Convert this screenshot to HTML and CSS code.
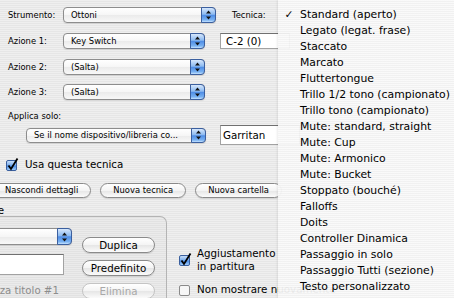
FILE: index.html
```html
<!DOCTYPE html>
<html lang="it">
<head>
    <meta charset="UTF-8">
    <title>Tecniche esecutive</title>
    <link rel="stylesheet" href="styles.css">
</head>
<body>

    <div class="dialog">
        <div class="form-row">
            <span class="form-label">Strumento:</span>
            <div class="popup popup-strumento">
                <span class="popup-text">Ottoni</span>
                <span class="popup-arrows"><svg width="7" height="10" viewBox="0 0 7 10"><path d="M3.5 0.5 L6 3.5 H1Z M3.5 9.5 L6 6.5 H1Z" fill="#111"/></svg></span>
            </div>
            <span class="tecnica-label">Tecnica:</span>
        </div>

        <div class="form-row">
            <span class="form-label">Azione 1:</span>
            <div class="popup popup-azione">
                <span class="popup-text">Key Switch</span>
                <span class="popup-arrows"><svg width="7" height="10" viewBox="0 0 7 10"><path d="M3.5 0.5 L6 3.5 H1Z M3.5 9.5 L6 6.5 H1Z" fill="#111"/></svg></span>
            </div>
            <div class="field field-note">C-2 (0)</div>
        </div>

        <div class="form-row row-tight">
            <span class="form-label">Azione 2:</span>
            <div class="popup popup-azione">
                <span class="popup-text">(Salta)</span>
                <span class="popup-arrows"><svg width="7" height="10" viewBox="0 0 7 10"><path d="M3.5 0.5 L6 3.5 H1Z M3.5 9.5 L6 6.5 H1Z" fill="#111"/></svg></span>
            </div>
        </div>

        <div class="form-row">
            <span class="form-label">Azione 3:</span>
            <div class="popup popup-azione">
                <span class="popup-text">(Salta)</span>
                <span class="popup-arrows"><svg width="7" height="10" viewBox="0 0 7 10"><path d="M3.5 0.5 L6 3.5 H1Z M3.5 9.5 L6 6.5 H1Z" fill="#111"/></svg></span>
            </div>
        </div>

        <div class="applica-label">Applica solo:</div>
        <div class="applica-row">
            <div class="popup popup-applica">
                <span class="popup-text">Se il nome dispositivo/libreria co...</span>
                <span class="popup-arrows"><svg width="7" height="10" viewBox="0 0 7 10"><path d="M3.5 0.5 L6 3.5 H1Z M3.5 9.5 L6 6.5 H1Z" fill="#111"/></svg></span>
            </div>
            <div class="field field-garritan">Garritan</div>
        </div>

        <div class="check-row check-main">
            <svg class="checkbox" width="14" height="15" viewBox="0 0 14 15">
                <defs>
                    <linearGradient id="aqua1" x1="0" y1="0" x2="0" y2="1">
                        <stop offset="0" stop-color="#cfe3fb"/>
                        <stop offset="0.45" stop-color="#7fb1ee"/>
                        <stop offset="0.55" stop-color="#4a8be4"/>
                        <stop offset="1" stop-color="#a8d4ff"/>
                    </linearGradient>
                </defs>
                <rect x="1.5" y="3.5" width="10" height="10" rx="1.5" fill="url(#aqua1)" stroke="#3a5f9e"/>
                <path d="M3.5 8.5 L6 12 L12.5 1.5" fill="none" stroke="#000" stroke-width="1.8"/>
            </svg>
            <span>Usa questa tecnica</span>
        </div>

        <div class="button-row">
            <button class="pill first">Nascondi dettagli</button>
            <button class="pill">Nuova tecnica</button>
            <button class="pill">Nuova cartella</button>
        </div>

        <div class="group-title">Partiture</div>

        <div class="lower">
            <div class="group">
                <div class="group-left">
                    <div class="popup popup-group">
                        <span class="popup-text"></span>
                        <span class="popup-arrows"><svg width="7" height="10" viewBox="0 0 7 10"><path d="M3.5 0.5 L6 3.5 H1Z M3.5 9.5 L6 6.5 H1Z" fill="#111"/></svg></span>
                    </div>
                    <div class="field field-name"></div>
                    <div class="caption">Senza titolo #1</div>
                </div>
                <div class="group-buttons">
                    <button class="pill big">Duplica</button>
                    <button class="pill big">Predefinito</button>
                    <button class="pill big" disabled>Elimina</button>
                </div>
            </div>

            <div class="checks">
                <div class="check-row">
                    <svg class="checkbox" width="14" height="15" viewBox="0 0 14 15">
                        <defs>
                            <linearGradient id="aqua2" x1="0" y1="0" x2="0" y2="1">
                                <stop offset="0" stop-color="#cfe3fb"/>
                                <stop offset="0.45" stop-color="#7fb1ee"/>
                                <stop offset="0.55" stop-color="#4a8be4"/>
                                <stop offset="1" stop-color="#a8d4ff"/>
                            </linearGradient>
                        </defs>
                        <rect x="1.5" y="3.5" width="10" height="10" rx="1.5" fill="url(#aqua2)" stroke="#3a5f9e"/>
                        <path d="M3.5 8.5 L6 12 L12.5 1.5" fill="none" stroke="#000" stroke-width="1.8"/>
                    </svg>
                    <span>Aggiustamento<br>in partitura</span>
                </div>
                <div class="check-row">
                    <svg class="checkbox" width="14" height="15" viewBox="0 0 14 15">
                        <rect x="1.5" y="3.5" width="10" height="10" rx="1.5" fill="#f7f7f7" stroke="#8a8a8a"/>
                    </svg>
                    <span>Non mostrare nuovamente</span>
                </div>
            </div>
        </div>
    </div>

    <!-- open popup menu of "Tecnica" -->
    <div class="menu">
        <div class="menu-item"><span class="menu-check">✓</span>Standard (aperto)</div>
        <div class="menu-item"><span class="menu-check"></span>Legato (legat. frase)</div>
        <div class="menu-item"><span class="menu-check"></span>Staccato</div>
        <div class="menu-item"><span class="menu-check"></span>Marcato</div>
        <div class="menu-item"><span class="menu-check"></span>Fluttertongue</div>
        <div class="menu-item"><span class="menu-check"></span>Trillo 1/2 tono (campionato)</div>
        <div class="menu-item"><span class="menu-check"></span>Trillo tono (campionato)</div>
        <div class="menu-item"><span class="menu-check"></span>Mute: standard, straight</div>
        <div class="menu-item"><span class="menu-check"></span>Mute: Cup</div>
        <div class="menu-item"><span class="menu-check"></span>Mute: Armonico</div>
        <div class="menu-item"><span class="menu-check"></span>Mute: Bucket</div>
        <div class="menu-item"><span class="menu-check"></span>Stoppato (bouché)</div>
        <div class="menu-item"><span class="menu-check"></span>Falloffs</div>
        <div class="menu-item"><span class="menu-check"></span>Doits</div>
        <div class="menu-item"><span class="menu-check"></span>Controller Dinamica</div>
        <div class="menu-item"><span class="menu-check"></span>Passaggio in solo</div>
        <div class="menu-item"><span class="menu-check"></span>Passaggio Tutti (sezione)</div>
        <div class="menu-item"><span class="menu-check"></span>Testo personalizzato</div>
    </div>

</body>
</html>
```

FILE: styles.css
```css
* {
    box-sizing: border-box;
}

body {
    margin: 0;
    width: 454px;
    height: 298px;
    overflow: hidden;
    position: relative;
    font-family: 'DejaVu Sans', sans-serif;
    font-size: 8.4px;
    color: #000;
    background: repeating-linear-gradient(to bottom, #efefef 0 1px, #e6e6e6 1px 2px); /* pinstripes */
}

.dialog {
    padding-top: 7px;
}

.form-row {
    display: flex;
    align-items: center;
    height: 16px;
    margin-bottom: 10px;
}

.form-row.row-tight {
    margin-bottom: 9px;
}

.form-label {
    flex: none;
    width: 63px;
    padding-left: 8px;
}

.tecnica-label {
    margin-left: 16px;
}

/* aqua popup button */
.popup {
    flex: none;
    display: flex;
    align-items: center;
    height: 16px;
    padding-left: 7px;
    border: 1px solid #8d8d8d;
    border-radius: 4px;
    background: linear-gradient(#ffffff, #f6f6f6 50%, #ebebeb 52%, #f8f8f8);
    box-shadow: 0 1px 1px rgba(0, 0, 0, 0.1);
}

.popup-text {
    flex: 1;
    white-space: nowrap;
    overflow: hidden;
}

.popup-arrows {
    flex: none;
    width: 15px;
    align-self: stretch;
    margin: -1px -1px -1px 0;
    border: 1px solid #3b5f9f;
    border-radius: 0 4px 4px 0;
    background: linear-gradient(#d6e7fc, #8bb9f0 45%, #4f8de5 52%, #78b1f2 85%, #c4e2ff);
    display: flex;
    align-items: center;
    justify-content: center;
}

.popup-strumento {
    width: 153px;
}

.popup-azione {
    width: 142px;
}

.popup-applica {
    width: 180px;
    height: 15px;
}

.popup-group {
    width: 93px;
    height: 17px;
}

/* text fields */
.field {
    flex: none;
    background: #fff;
    border: 1px solid #a2a2a2;
    border-top-color: #707070;
    font-size: 10.3px;
    white-space: nowrap;
    display: flex;
    align-items: center;
}

.field-note {
    width: 70px;
    height: 16px;
    margin-left: 15px;
    padding-left: 5px;
}

.field-garritan {
    width: 80px;
    height: 20px;
    margin-left: 14px;
    padding-left: 2px;
}

.field-name {
    width: 85px;
    height: 21px;
    margin-top: 9px;
}

.applica-label {
    margin-top: 4px;
    padding-left: 8px;
    line-height: 12px;
}

.applica-row {
    display: flex;
    align-items: center;
    height: 20px;
    margin-top: 3px;
    padding-left: 26px;
}

/* checkboxes */
.check-row {
    display: flex;
    align-items: center;
    font-size: 10.3px;
    line-height: 12.5px;
}

.checkbox {
    flex: none;
    margin-right: 5px;
}

.check-main {
    margin-top: 12px;
    padding-left: 5px;
    height: 15px;
}

.check-main span {
    margin-left: 1px;
}

/* aqua push buttons */
.pill {
    font-family: 'DejaVu Sans', sans-serif;
    font-size: 8.4px;
    color: #000;
    height: 15px;
    padding: 0 12px;
    border: 1px solid #8a8a8a;
    border-radius: 8px;
    background: linear-gradient(#ffffff, #f4f4f4 50%, #e6e6e6 52%, #fbfbfb);
    box-shadow: 0 1px 1px rgba(0, 0, 0, 0.12);
    white-space: nowrap;
    line-height: 13px;
}

.pill.big {
    width: 73px;
    height: 16px;
    padding: 0;
    font-size: 10.3px;
}

.pill:disabled {
    color: #a8a8a8;
    border-color: #c4c4c4;
    box-shadow: none;
}

.button-row {
    display: flex;
    gap: 9px;
    margin-top: 11px;
}

.pill.first {
    margin-left: -8px;
}

.group-title {
    margin-top: 6px;
    margin-left: -40px;
    font-size: 10.3px;
    line-height: 12px;
}

.lower {
    display: flex;
    align-items: flex-start;
    margin-top: 0;
}

.group {
    flex: none;
    display: flex;
    gap: 10px;
    width: 197px;
    height: 100px;
    margin-left: -30px;
    padding: 11px 0 0 8px;
    border: 1px solid #b4b4b4;
    border-bottom: none;
    border-radius: 0 7px 0 0;
    background: rgba(0, 0, 0, 0.015);
}

.group-left {
    width: 93px;
}

.caption {
    margin-top: 9px;
    margin-left: 1.5px;
    font-size: 10.2px;
    line-height: 13px;
    color: #8c8c8c;
    white-space: nowrap;
}

.group-buttons {
    display: flex;
    flex-direction: column;
    gap: 7px;
    margin-top: 9px;
}

.checks {
    margin-left: 11px;
    margin-top: 31px;
    display: flex;
    flex-direction: column;
    gap: 10px;
}

.checks .check-row {
    white-space: nowrap;
}

/* translucent menu */
.menu {
    position: absolute;
    top: 0;
    left: 278px;
    width: 176px;
    height: 298px;
    padding-top: 6.5px;
    font-size: 10.85px;
    background: repeating-linear-gradient(to bottom, rgba(250, 250, 250, 0.94) 0 1px, rgba(242, 242, 242, 0.94) 1px 2px);
    box-shadow: -1px 0 2px rgba(0, 0, 0, 0.08);
}

.menu-item {
    display: flex;
    height: 16px;
    line-height: 16px;
    white-space: nowrap;
}

.menu-check {
    flex: none;
    width: 22px;
    text-align: center;
}
```
